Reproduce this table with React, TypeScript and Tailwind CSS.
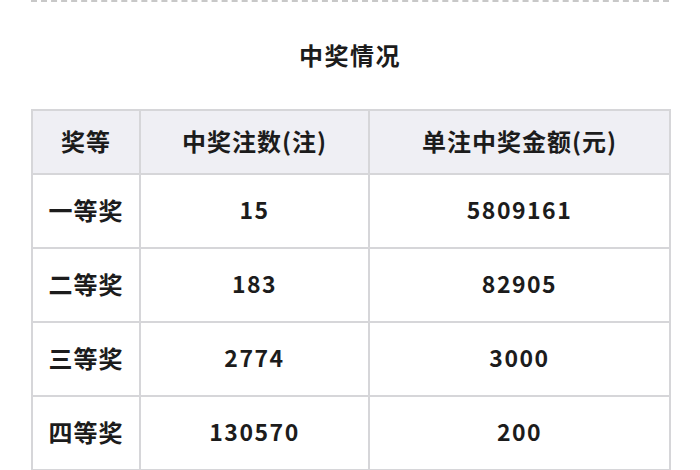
const rows = [
  { level: "一等奖", count: "15", amount: "5809161" },
  { level: "二等奖", count: "183", amount: "82905" },
  { level: "三等奖", count: "2774", amount: "3000" },
  { level: "四等奖", count: "130570", amount: "200" },
]

export default function App() {
  return (
    <div
      className="w-[700px] h-[470px] overflow-hidden bg-white text-[#1c1c1c]"
      style={{ fontFamily: '"Noto Sans CJK SC", "Noto Sans", sans-serif' }}
    >
      <div className="mx-[31px] border-t-2 border-dashed border-[#c8c8c8]">
        {/* title */}
        <div className="h-[107px] flex items-center justify-center pb-[2px]">
          <h2 className="text-[24px] font-bold tracking-[1.5px]">中奖情况</h2>
        </div>

        <table className="w-[638px] border-collapse table-fixed">
          <colgroup>
            <col className="w-[108px]" />
            <col className="w-[229px]" />
            <col className="w-[301px]" />
          </colgroup>
          <thead>
            <tr className="h-[64px] bg-[#efeff4]">
              <th className="border-2 border-[#d6d6d9] pb-[3px] text-[24px] font-bold tracking-[1px]">奖等</th>
              <th className="border-2 border-[#d6d6d9] pb-[3px] text-[24px] font-bold tracking-[1px]">中奖注数(注)</th>
              <th className="border-2 border-[#d6d6d9] pb-[3px] text-[24px] font-bold tracking-[1px]">单注中奖金额(元)</th>
            </tr>
          </thead>
          <tbody>
            {rows.map((r) => (
              <tr key={r.level} className="h-[74px]">
                <td className="border-2 border-[#d6d6d9] pb-[3px] text-center text-[24px] font-bold tracking-[1px]">{r.level}</td>
                <td className="border-2 border-[#d6d6d9] pb-[3px] text-center text-[23px] font-bold tracking-[1.5px]">{r.count}</td>
                <td className="border-2 border-[#d6d6d9] pb-[3px] text-center text-[23px] font-bold tracking-[1.5px]">{r.amount}</td>
              </tr>
            ))}
          </tbody>
        </table>
      </div>
    </div>
  )
}
